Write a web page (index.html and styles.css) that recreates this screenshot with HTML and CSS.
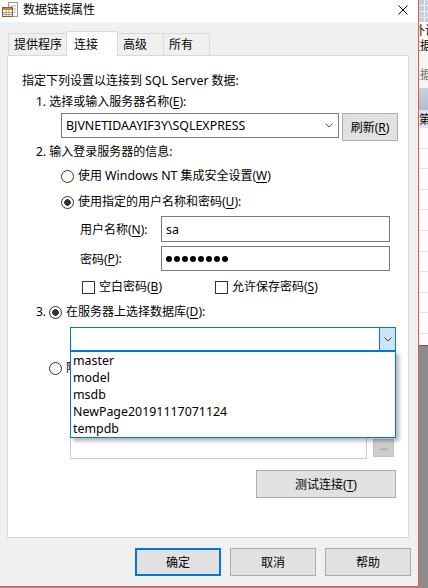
FILE: index.html
```html
<!DOCTYPE html>
<html lang="zh-CN">
<head>
<meta charset="utf-8">
<title>数据链接属性</title>
<link rel="stylesheet" href="styles.css">
</head>
<body>
<div class="screen">
  <div class="dialog">
    <div class="titlebar">
      <svg class="app-icon" viewBox="0 0 16 16" width="16" height="16">
        <rect x="6.5" y="0.5" width="9" height="14" fill="#f7f7f7" stroke="#9a9a9a"/>
        <line x1="8" y1="4" x2="14" y2="4" stroke="#b5b5b5"/>
        <line x1="8" y1="7" x2="14" y2="7" stroke="#b5b5b5"/>
        <line x1="8" y1="10" x2="14" y2="10" stroke="#b5b5b5"/>
        <rect x="0.5" y="5.5" width="10" height="9" fill="#fff" stroke="#7d6248"/>
        <rect x="1" y="6" width="9" height="2" fill="#e07a2a"/>
        <line x1="1" y1="10.5" x2="10" y2="10.5" stroke="#b89a7c"/>
        <line x1="1" y1="12.5" x2="10" y2="12.5" stroke="#b89a7c"/>
        <line x1="4" y1="8" x2="4" y2="14" stroke="#b89a7c"/>
        <line x1="7" y1="8" x2="7" y2="14" stroke="#b89a7c"/>
      </svg>
      <span class="title">数据链接属性</span>
      <svg class="close" viewBox="0 0 10 10" width="10" height="10">
        <path d="M0.5 0.5 L9.5 9.5 M9.5 0.5 L0.5 9.5" stroke="#000" stroke-width="1" fill="none"/>
      </svg>
    </div>
    <div class="content">
      <div class="tabs">
        <div class="tab t1">提供程序</div>
        <div class="tab t2 active">连接</div>
        <div class="tab t3">高级</div>
        <div class="tab t4">所有</div>
      </div>
      <div class="panel">
        <div class="line intro">指定下列设置以连接到 <span class="lat">SQL Server</span> 数据:</div>
        <div class="line s1">1. 选择或输入服务器名称(<u>E</u>):</div>
        <div class="server-row">
          <div class="combo server-combo">
            <span class="combo-text lat">BJVNETIDAAYIF3Y\SQLEXPRESS</span>
            <svg class="chev" viewBox="0 0 8 5" width="8" height="5"><path d="M0.5 0.5 L4 4 L7.5 0.5" stroke="#555" fill="none"/></svg>
          </div>
          <div class="btn refresh">刷新(<u>R</u>)</div>
        </div>
        <div class="line s2">2. 输入登录服务器的信息:</div>
        <div class="line opt r1"><span class="radio"></span>使用 <span class="lat">Windows NT</span> 集成安全设置(<u>W</u>)</div>
        <div class="line opt r2"><span class="radio checked"></span>使用指定的用户名称和密码(<u>U</u>):</div>
        <div class="field-row user">
          <span class="field-label">用户名称(<u>N</u>):</span>
          <div class="textbox lat">sa</div>
        </div>
        <div class="field-row pass">
          <span class="field-label">密码(<u>P</u>):</span>
          <div class="textbox"><span class="dots"><i></i><i></i><i></i><i></i><i></i><i></i><i></i><i></i></span></div>
        </div>
        <div class="line checks">
          <span class="check-item first"><span class="checkbox"></span>空白密码(<u>B</u>)</span>
          <span class="check-item"><span class="checkbox"></span>允许保存密码(<u>S</u>)</span>
        </div>
        <div class="line step3"><span class="num">3.</span><span class="radio checked"></span>在服务器上选择数据库(<u>D</u>):</div>
        <div class="db-wrap">
          <div class="combo db-combo">
            <span class="drop-btn"><svg class="chev" viewBox="0 0 8 5" width="8" height="5"><path d="M0.5 0.5 L4 4 L7.5 0.5" stroke="#444" fill="none"/></svg></span>
          </div>
          <ul class="dropdown">
            <li>master</li>
            <li>model</li>
            <li>msdb</li>
            <li>NewPage20191117071124</li>
            <li>tempdb</li>
          </ul>
        </div>
        <div class="line attach"><span class="radio"></span>附加一个数据库文件作为数据库名(<u>H</u>):</div>
        <div class="textbox disabled attach-name"></div>
        <div class="line file-label">使用文件名(<u>F</u>):</div>
        <div class="file-row">
          <div class="textbox disabled file-box"></div>
          <div class="browse">...</div>
        </div>
        <div class="btn test">测试连接(<u>T</u>)</div>
      </div>
      <div class="buttons">
        <div class="btn default">确定</div>
        <div class="btn">取消</div>
        <div class="btn">帮助</div>
      </div>
    </div>
  </div>
  <div class="bgwin">
    <div class="bg-grid"></div>
    <div class="bg-white">
      <div class="bg-line shift">外设</div>
      <div class="bg-line shift2">数据</div>
    </div>
    <div class="bg-light"><div class="bg-line gray shift2">数据</div></div>
    <div class="bg-band"></div>
    <div class="bg-first">第</div>
    <div class="bg-rows"></div>
    <div class="bg-rest"></div>
  </div>
</div>
</body>
</html>
```

FILE: styles.css
```css
* { box-sizing: border-box; }
html, body { margin: 0; padding: 0; }
body {
  background: #8e8e8e;
  font-family: "Noto Sans", "Noto Sans CJK SC", sans-serif;
  font-size: 12px;
  color: #000;
}
u { text-decoration: underline; text-underline-offset: 2px; }
.lat { font-size: 12.4px; }

.screen { display: flex; width: 428px; height: 588px; overflow: hidden; }

.dialog {
  width: 419px;
  height: 587px;
  flex: none;
  background: #f0f0f0;
  border-right: 1px solid #ef573c;
  border-bottom: 1px solid #ef573c;
  display: flex;
  flex-direction: column;
}

.titlebar {
  height: 22px;
  background: #fff;
  display: flex;
  align-items: center;
  padding: 0 0 3px 2px;
  flex: none;
}
.app-icon { flex: none; }
.title { margin-left: 5px; line-height: 16px; }
.close { margin-left: auto; margin-right: 10px; flex: none; }

.content { padding: 9px 7px 0 7px; }

.tabs { display: flex; align-items: flex-end; height: 24px; padding-left: 1px; }
.tab {
  height: 22px;
  border: 1px solid #d9d9d9;
  border-bottom: none;
  background: #f0f0f0;
  line-height: 21px;
  padding-left: 5px;
  white-space: nowrap;
}
.t1 { width: 60px; }
.t2 { width: 52px; margin-left: -2px; }
.t3 { width: 47px; margin-left: -1px; }
.t4 { width: 47px; margin-left: -1px; }
.tab.active {
  height: 25px;
  background: #fff;
  padding-top: 2px;
  padding-left: 7px;
  margin-bottom: -1px;
  position: relative;
  z-index: 1;
}

.panel {
  width: 402px;
  height: 483px;
  background: #fff;
  border: 1px solid #d9d9d9;
  padding: 17px 0 0 14px;
  position: relative;
}

.line {
  height: 16px;
  line-height: 16px;
  display: flex;
  align-items: center;
  white-space: nowrap;
}
.line .lat { margin: 0 3px; }
.s1 { margin: 5px 0 0 14px; }
.server-row { margin: 3px 0 0 39px; display: flex; align-items: flex-start; height: 28px; }
.s2 { margin: 3px 0 0 14px; }
.r1 { margin-top: 8px; padding-left: 39px; }
.r2 { margin-top: 10px; padding-left: 39px; }
.user { margin-top: 6px; height: 26px; }
.pass { margin-top: 4px; height: 25px; }
.checks { margin-top: 8px; padding-left: 60px; }
.step3 { margin: 9px 0 0 14px; }
.db-wrap { margin: 7px 0 0 48px; width: 326px; height: 24px; position: relative; }
.attach { margin-top: 9px; padding-left: 27px; }
.attach-name { margin: 5px 0 0 48px; width: 326px; height: 23px; }
.file-label { margin: 5px 0 0 48px; }
.file-row { margin: 11px 0 0 48px; display: flex; align-items: center; height: 23px; }

.combo { border: 1px solid #7a7a7a; background: #fff; display: flex; align-items: center; }
.server-combo { width: 278px; height: 25px; padding-left: 4px; }
.combo-text { white-space: nowrap; }
.server-combo .chev { margin-left: auto; margin-right: 5px; flex: none; }

.btn {
  display: flex;
  align-items: center;
  justify-content: center;
  background: #e1e1e1;
  border: 1px solid #adadad;
  white-space: nowrap;
}
.refresh { width: 56px; height: 28px; margin-left: 3px; }
.test { margin: 11px 0 0 234px; width: 140px; height: 28px; }

.radio {
  width: 13px;
  height: 13px;
  flex: none;
  border: 1px solid #333;
  border-radius: 50%;
  background: #fff;
  margin-right: 4px;
}
.radio.checked { background: radial-gradient(circle, #333 0 3px, #fff 3.6px); }

.field-row { display: flex; align-items: stretch; }
.field-label { margin-left: 58px; width: 81px; display: flex; align-items: center; white-space: nowrap; }
.textbox {
  border: 1px solid #7a7a7a;
  background: #fff;
  padding-left: 4px;
  display: flex;
  align-items: center;
}
.field-row .textbox { width: 229px; }
.dots { display: flex; gap: 2px; }
.dots i { width: 6px; height: 6px; border-radius: 50%; background: #000; display: block; }

.check-item { display: flex; align-items: center; }
.check-item.first { width: 133px; }
.checkbox { width: 13px; height: 13px; border: 1px solid #333; background: #fff; margin-right: 4px; flex: none; }

.num { width: 13px; display: inline-block; }

.db-combo { width: 326px; height: 24px; border-color: #0078d7; }
.drop-btn {
  margin-left: auto;
  width: 16px;
  height: 100%;
  background: #cce4f7;
  border-left: 1px solid #0078d7;
  display: flex;
  align-items: center;
  justify-content: center;
}
.dropdown {
  position: absolute;
  left: 0;
  top: 24px;
  width: 326px;
  margin: 0;
  padding: 0;
  list-style: none;
  background: #fff;
  border: 1px solid #0078d7;
  box-shadow: 3px 3px 4px rgba(0, 0, 0, 0.3);
  z-index: 2;
  font-size: 12.4px;
}
.dropdown li { height: 17px; line-height: 18px; padding-left: 2px; white-space: nowrap; }

.textbox.disabled { border-color: #cccccc; }
.file-box { width: 297px; height: 23px; }
.browse {
  width: 21px;
  height: 18px;
  margin-left: 6px;
  background: #cccccc;
  border: 1px solid #c4c4c4;
  color: #808080;
  font-size: 10px;
  line-height: 12px;
  text-align: center;
}

.buttons { display: flex; justify-content: flex-end; gap: 9px; margin-top: 10px; }
.buttons .btn { width: 86px; height: 28px; }
.btn.default { border: 2px solid #0078d7; }

/* background window strip */
.bgwin {
  width: 9px;
  flex: none;
  display: flex;
  flex-direction: column;
  overflow: hidden;
  font-family: "Noto Sans CJK SC", sans-serif;
  background: #8c8c8c;
}
.bg-grid {
  height: 22px;
  background-color: #c3d0de;
  background-image:
    repeating-linear-gradient(to bottom, transparent 0 5px, #eef2f7 5px 6px),
    repeating-linear-gradient(to right, transparent 0 5px, #eef2f7 5px 6px);
}
.bg-white { height: 30px; background: #fff; }
.bg-line { line-height: 15px; white-space: nowrap; }
.shift { margin-left: -6px; }
.shift2 { margin-left: -11px; }
.gray { color: #6e6e6e; }
.bg-light { height: 36px; background: #f6f6f6; padding-top: 14px; }
.bg-band { height: 22px; background: linear-gradient(#c6d2e0, #adbed3); }
.bg-first { height: 18px; line-height: 18px; background: #dbe5ef; white-space: nowrap; }
.bg-rows {
  height: 217px;
  background: #fff;
  background-image: repeating-linear-gradient(to bottom, transparent 0 19.6px, #e2e2e2 19.6px 20.6px);
}
.bg-rest { flex: 1; background: #8c8c8c; border-top: 1px solid #5a5a5a; }
```
